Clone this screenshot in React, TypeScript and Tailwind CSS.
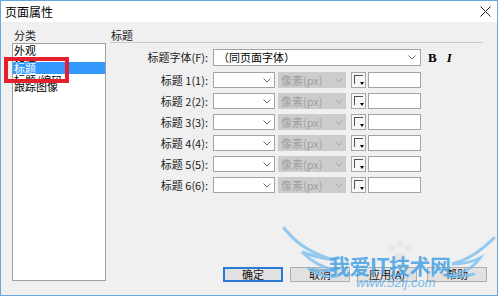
import React from 'react';

const cjk = { fontFamily: '"Noto Sans CJK SC", "Liberation Sans", sans-serif' };

function Chevron({ color = '#6d6d6d' }: { color?: string }) {
  return (
    <svg width="8" height="5" viewBox="0 0 8 5" className="shrink-0">
      <polyline points="0.5,0.5 4,4 7.5,0.5" fill="none" stroke={color} strokeWidth="1" />
    </svg>
  );
}

function ColorSwatch() {
  return (
    <div className="relative w-[15px] h-[16px] border border-[#a8a8a8] bg-[#f7f7f7]">
      <div className="absolute left-[2px] top-[2px] w-[9px] h-[9px] border-l border-t border-[#505050]" />
      <div className="absolute right-[1px] bottom-[2px] w-0 h-0 border-x-[2px] border-x-transparent border-t-[3px] border-t-black" />
    </div>
  );
}

function HeadingRow({ n }: { n: number }) {
  return (
    <div className="flex items-center h-[16px]">
      <div className="w-[99px] text-right pr-[1px] text-[11px] leading-[16px] text-[#222]">
        标题 {n}({n}):
      </div>
      <div className="ml-[4px] w-[62px] h-[16px] border border-[#a3a3a3] bg-white flex items-center justify-end pr-[3px]">
        <Chevron />
      </div>
      <div className="ml-[3px] w-[68px] h-[16px] bg-[#cccccc] flex items-center justify-between px-[3px] text-[11px] text-[#a0a0a0]">
        <span>像素(px)</span>
        <Chevron color="#a8a8a8" />
      </div>
      <div className="ml-[5px]">
        <ColorSwatch />
      </div>
      <div className="ml-[2px] w-[53px] h-[16px] border border-[#a3a3a3] bg-white" />
    </div>
  );
}

function Button({ label, primary }: { label: string; primary?: boolean }) {
  return (
    <div
      className={
        'w-[60px] h-[15px] flex items-center justify-center text-[11px] text-[#111] bg-[#e1e1e1] ' +
        (primary ? 'border-2 border-[#2a7ad5]' : 'border border-[#adadad]')
      }
    >
      {label}
    </div>
  );
}

export default function App() {
  return (
    <div className="relative w-[500px] h-[297px] bg-white overflow-hidden select-none" style={cjk}>
      <div className="w-[498px] h-[296px] border border-[#6aa6e0] flex flex-col bg-[#f0f0f0]">
        {/* title bar */}
        <div className="h-[21px] bg-white flex items-center justify-between pl-[4px] pr-[6px]">
          <span className="text-[12px] leading-[14px] text-black">页面属性</span>
          <svg width="11" height="11" viewBox="0 0 11 11">
            <path d="M0.5 0.5 L10.5 10.5 M10.5 0.5 L0.5 10.5" stroke="#222" strokeWidth="1" />
          </svg>
        </div>

        <div className="flex flex-1 pl-[11px] pt-[6px]">
          {/* category list */}
          <div className="w-[94px] flex flex-col">
            <div className="h-[15px] pl-[2px] text-[11px] leading-[14px] text-[#222]">分类</div>
            <div className="h-[238px] border border-[#a0a0a0] bg-white overflow-hidden text-[11px] text-black">
              <div className="h-[12px] leading-[12px] pl-[1px]">外观</div>
              <div className="h-[6px] leading-[12px] pl-[1px] overflow-hidden">链接</div>
              <div className="h-[12px] leading-[12px] pl-[1px] bg-[#3399ff] text-white">标题</div>
              <div className="h-[6px] leading-[12px] pl-[1px] overflow-hidden">标题/编码</div>
              <div className="h-[12px] leading-[12px] pl-[1px]">跟踪图像</div>
            </div>
          </div>

          {/* settings panel */}
          <div className="ml-[4px] w-[378px] flex flex-col">
            <div className="w-[373px] h-[15px] pl-[1px] text-[11px] leading-[14px] text-[#222] border-b border-[#c9c9c9]">
              标题
            </div>

            <div className="mt-[6px] flex items-center h-[17px]">
              <div className="w-[99px] text-right pr-[1px] text-[11px] leading-[17px] text-[#222]">标题字体(F):</div>
              <div className="ml-[4px] w-[208px] h-[17px] border border-[#a3a3a3] bg-white flex items-center justify-between pl-[4px] pr-[4px] text-[11px] text-black">
                <span>（同页面字体）</span>
                <Chevron />
              </div>
              <span className="ml-[7px] text-[13px] font-bold text-black" style={{ fontFamily: '"Liberation Serif", serif' }}>
                B
              </span>
              <span className="ml-[10px] text-[13px] font-bold italic text-black" style={{ fontFamily: '"Liberation Serif", serif' }}>
                I
              </span>
            </div>

            <div className="mt-[6px] flex flex-col gap-[5px]">
              {[1, 2, 3, 4, 5, 6].map((n) => (
                <HeadingRow key={n} n={n} />
              ))}
            </div>

            <div className="mt-auto mb-[13px] ml-[113px] flex gap-[7px]">
              <Button label="确定" primary />
              <Button label="取消" />
              <Button label="应用(A)" />
              <div className="ml-[3px]">
                <Button label="帮助" />
              </div>
            </div>
          </div>
        </div>
      </div>

      {/* red annotation box */}
      <div className="absolute left-[4px] top-[57px] w-[65px] h-[26px] border-4 border-[#e3202b]" />

      {/* watermark */}
      <div className="absolute left-[280px] top-[226px] w-[218px] h-[68px] pointer-events-none">
        <svg width="218" height="68" viewBox="0 0 218 68" className="absolute left-0 top-0 opacity-80">
          <path d="M4 2 C18 20 34 28 54 34 C42 32 32 30 22 26 C32 36 42 42 56 44 C46 46 36 44 28 42 C38 50 48 52 58 50" fill="none" stroke="#7cc0f0" strokeWidth="3" strokeLinecap="round" />
          <path d="M214 12 C200 26 188 34 172 38 C182 38 192 36 200 32 C192 44 180 48 168 50 C178 52 186 50 194 48" fill="none" stroke="#7cc0f0" strokeWidth="3" strokeLinecap="round" />
          <circle cx="112" cy="22" r="3" fill="#e4e4e4" />
          <circle cx="120" cy="18" r="3" fill="#e4e4e4" />
          <circle cx="128" cy="22" r="3" fill="#e4e4e4" />
          <ellipse cx="120" cy="31" rx="6" ry="5" fill="#e4e4e4" />
        </svg>
        <div className="absolute left-[49px] top-[28px] text-[21px] leading-[23px] font-bold tracking-[-0.5px] text-[#4fa6e6] opacity-90">
          我爱IT技术网
        </div>
        <div
          className="absolute left-[76px] top-[49px] text-[13px] leading-[15px] italic text-[#5aaeea] opacity-80"
          style={{ fontFamily: '"Liberation Sans", sans-serif' }}
        >
          www.52ij.com
        </div>
      </div>
    </div>
  );
}
